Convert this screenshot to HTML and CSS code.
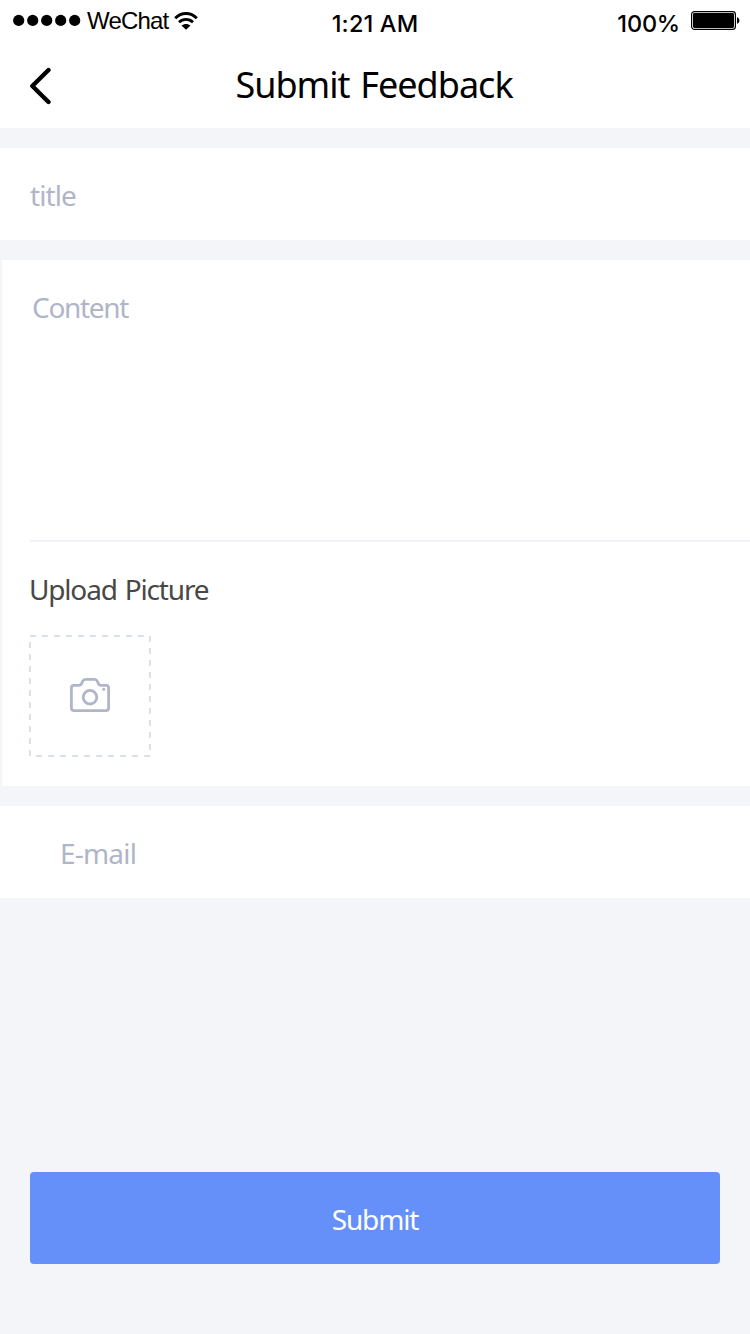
FILE: index.html
```html
<!DOCTYPE html>
<html lang="en">
<head>
<meta charset="utf-8">
<title>Submit Feedback</title>
<link rel="stylesheet" href="styles.css">
</head>
<body>
<header class="header">
  <div class="status">
    <div class="status-left">
      <svg class="signal" width="68" height="12" viewBox="0 0 68 12"><circle cx="5.7" cy="6.4" r="5.6"/><circle cx="19.7" cy="6.4" r="5.6"/><circle cx="33.7" cy="6.4" r="5.6"/><circle cx="47.7" cy="6.4" r="5.6"/><circle cx="61.7" cy="6.4" r="5.6"/></svg>
      <span class="carrier">WeChat</span>
      <svg class="wifi" width="24" height="18" viewBox="0 0 24 18"><path d="M1.2 6.2C7.2-.1 16.8-.1 22.8 6.2" fill="none" stroke="#000" stroke-width="2.9"/><path d="M5 10.3C9 6.4 15 6.4 19 10.3" fill="none" stroke="#000" stroke-width="2.7"/><path d="M7.5 13.6C10 11.4 14 11.4 16.5 13.6L12 17.8Z"/></svg>
    </div>
    <span class="time">1:21 AM</span>
    <div class="status-right">
      <span class="percent">100%</span>
      <svg class="battery" width="49" height="20" viewBox="0 0 49 20"><rect x=".6" y=".6" width="43.8" height="17.8" rx="2.8" fill="none" stroke="#000" stroke-width="1.2"/><rect x="2" y="2" width="41" height="15" rx="1.4"/><path d="M46 6.2C49.2 7 49.2 12 46 12.8Z"/></svg>
    </div>
  </div>
  <div class="nav">
    <svg class="back" width="24" height="38" viewBox="0 0 24 38"><path d="M19.5 3L3.3 19L19.5 35" fill="none" stroke="#000" stroke-width="4.4" stroke-linecap="round" stroke-linejoin="round"/></svg>
    <h1 class="nav-title">Submit Feedback</h1>
  </div>
</header>
<main class="form">
  <div class="field"><span class="hint hint-title">title</span></div>
  <section class="details">
    <div class="content"><span class="hint hint-content">Content</span></div>
    <div class="upload">
      <h2 class="upload-title">Upload Picture</h2>
      <svg class="picker" width="122" height="122" viewBox="0 0 122 122" fill="none">
        <path d="M1 1H121V121H1Z" stroke="#dae0ea" stroke-width="2" stroke-dasharray="6 6"/>
        <g stroke="#b0b5c9" stroke-width="2.8" stroke-linejoin="round"><path d="M44.7 50.3H50C52 50.3 52.3 49.7 53 47.8L53.7 46.2C54.4 44.6 55 44.3 56.5 44.3H65.5C67 44.3 67.6 44.6 68.3 46.2L69 47.8C69.7 49.7 70 50.3 72 50.3H77.3Q79.6 50.3 79.6 52.8V73.1Q79.6 75.6 77.1 75.6H44.9Q42.4 75.6 42.4 73.1V52.8Q42.4 50.3 44.7 50.3Z"/><circle cx="61" cy="62.2" r="6.8"/></g>
        <circle cx="74.7" cy="54.2" r="1.5" fill="#b0b5c9"/>
      </svg>
    </div>
  </section>
  <div class="field email"><span class="hint hint-email">E-mail</span></div>
</main>
<button class="submit" type="button"><span class="submit-label">Submit</span></button>
</body>
</html>
```

FILE: styles.css
```css
* { box-sizing: border-box; }
body {
  margin: 0;
  height: 1334px;
  background: #f3f5f9;
  font-family: "Noto Sans", sans-serif;
  color: #000;
  overflow: hidden;
}
svg { display: block; flex: none; }
h1, h2 { margin: 0; font-weight: 400; }
.header { height: 128px; background: #fff; }
.status {
  height: 44px;
  display: grid;
  grid-template-columns: 1fr auto 1fr;
  align-items: start;
  padding: 0 10px 0 13px;
  line-height: 28px;
  white-space: nowrap;
}
.status-left, .status-right { display: flex; }
.status-right { justify-content: flex-end; }
.signal { margin-top: 14px; }
.carrier {
  width: 82px;
  margin: 7px 0 0 6px;
  font-family: "Liberation Sans", sans-serif;
  font-size: 24px;
  letter-spacing: -0.8px;
}
.wifi { margin: 12px 0 0 5px; }
.time, .percent {
  margin-top: 10px;
  font-family: Inter, sans-serif;
  font-size: 23.5px;
  font-weight: 500;
}
.time { margin-right: 3px; letter-spacing: 0.15px; }
.percent { letter-spacing: -0.2px; }
.battery { margin: 11px 0 0 11px; }
.nav {
  height: 84px;
  display: grid;
  grid-template-columns: 53px 1fr 53px;
  padding-top: 16px;
}
.back { margin: 7px 0 0 29px; }
.nav-title {
  margin-right: 2px;
  font-size: 36px;
  letter-spacing: -1px;
  word-spacing: 2.5px;
  line-height: 50px;
  text-align: center;
  white-space: nowrap;
}
.form { display: flex; flex-direction: column; gap: 20px; padding-top: 20px; }
.field { height: 92px; padding: 0 30px; background: #fff; line-height: 94px; }
.email { padding-left: 60px; }
.hint { color: #b0b5c9; font-size: 28px; letter-spacing: -0.9px; }
.hint-content { letter-spacing: -1.3px; }
.hint-email { letter-spacing: -0.8px; }
.details { height: 526px; margin-left: 2px; background: #fff; }
.content {
  height: 282px;
  margin-left: 28px;
  padding: 29px 0 0 2px;
  border-bottom: 2px solid #f0f2f7;
  line-height: 36px;
}
.upload { padding: 29px 0 0 27px; }
.upload-title {
  color: #484848;
  font-size: 28px;
  letter-spacing: -1.18px;
  word-spacing: 2px;
  line-height: 36px;
}
.picker { margin-top: 28px; }
.submit {
  display: block;
  width: 690px;
  height: 92px;
  margin: 274px 30px 0;
  padding: 1px 0 0;
  border: 0;
  border-radius: 4px;
  background: #6590f9;
  color: #fff;
  font-family: inherit;
  font-size: 28px;
  letter-spacing: -1.15px;
}
```
